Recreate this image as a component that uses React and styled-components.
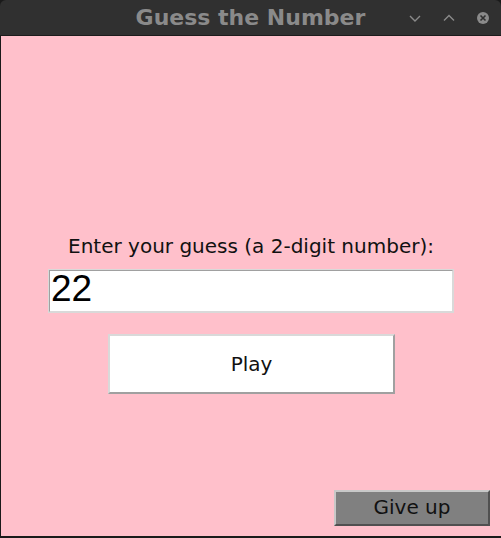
import React, { useState } from "react";
import styled, { createGlobalStyle } from "styled-components";

const Global = createGlobalStyle`
  html, body { margin: 0; padding: 0; background: #1a1a1a; }
  body { font-family: "DejaVu Sans", sans-serif; }
`;

const Window = styled.div`
  width: 501px;
  height: 538px;
  display: flex;
  flex-direction: column;
  overflow: hidden;
`;

const TitleBar = styled.div`
  height: 35px;
  flex: none;
  background: #303030;
  border-bottom: 1px solid #1c1c1c;
  border-radius: 6px 6px 0 0;
  display: grid;
  grid-template-columns: 1fr auto 1fr;
  align-items: center;
`;

const Title = styled.div`
  grid-column: 2;
  font-family: "DejaVu Sans", sans-serif;
  font-weight: bold;
  font-size: 22px;
  color: #8a8a8a;
`;

const Controls = styled.div`
  grid-column: 3;
  justify-self: end;
  display: flex;
  align-items: center;
  gap: 20px;
  padding-right: 11px;
`;

const Body = styled.div`
  flex: 1;
  background: #ffc0cb;
  border-left: 1px solid #1a1a1a;
  border-bottom: 2px solid #1a1a1a;
  display: flex;
  flex-direction: column;
  align-items: center;
  padding-top: 198px;
`;

const Label = styled.div`
  font-size: 20px;
  line-height: 24px;
  color: #111;
`;

const Entry = styled.input`
  box-sizing: border-box;
  margin-top: 12px;
  width: 404px;
  height: 42px;
  background: #fff;
  border: 1px solid;
  border-color: #a0a0a0 #d9d9d9 #d9d9d9 #a0a0a0;
  outline: 1px solid #d9d9d9;
  font-family: "Liberation Sans", Arial, sans-serif;
  font-size: 37px;
  line-height: 40px;
  color: #000;
  padding: 0 0 4px 1px;
`;

const Button = styled.button`
  box-sizing: border-box;
  width: ${(p) => p.$w}px;
  height: ${(p) => p.$h}px;
  background: ${(p) => p.$bg};
  border: 2px solid;
  border-color: #d9d9d9 #a0a0a0 #a0a0a0 #d9d9d9;
  font-family: "DejaVu Sans", sans-serif;
  font-size: ${(p) => p.$fs}px;
  color: #111;
  padding: 0;
`;

const PlayButton = styled(Button)`
  margin-top: 22px;
  margin-left: 1px;
`;

const GiveUp = styled(Button)`
  margin-top: 96px;
  align-self: flex-end;
  margin-right: 11px;
  padding-bottom: 2px;
  border-color: #c8c8c8 #505050 #505050 #c8c8c8;
`;

const Icon = ({ children }) => (
  <svg width="14" height="14" viewBox="0 0 14 14" fill="none">
    {children}
  </svg>
);

export default function App() {
  const [value, setValue] = useState("22");
  return (
    <>
      <Global />
      <Window>
        <TitleBar>
          <Title>Guess the Number</Title>
          <Controls>
            <Icon>
              <path d="M2 5 L7 10 L12 5" stroke="#8a8a8a" strokeWidth="1.4" />
            </Icon>
            <Icon>
              <path d="M2 9.5 L7 4.5 L12 9.5" stroke="#8a8a8a" strokeWidth="1.4" />
            </Icon>
            <Icon>
              <circle cx="7" cy="7" r="6" fill="#8a8a8a" />
              <path d="M4.5 4.5 L9.5 9.5 M9.5 4.5 L4.5 9.5" stroke="#303030" strokeWidth="1.6" />
            </Icon>
          </Controls>
        </TitleBar>
        <Body>
          <Label>Enter your guess (a 2-digit number):</Label>
          <Entry value={value} onChange={(e) => setValue(e.target.value)} />
          <PlayButton $w={287} $h={60} $bg="#ffffff" $fs={20}>Play</PlayButton>
          <GiveUp $w={156} $h={36} $bg="#808080" $fs={20}>Give up</GiveUp>
        </Body>
      </Window>
    </>
  );
}
